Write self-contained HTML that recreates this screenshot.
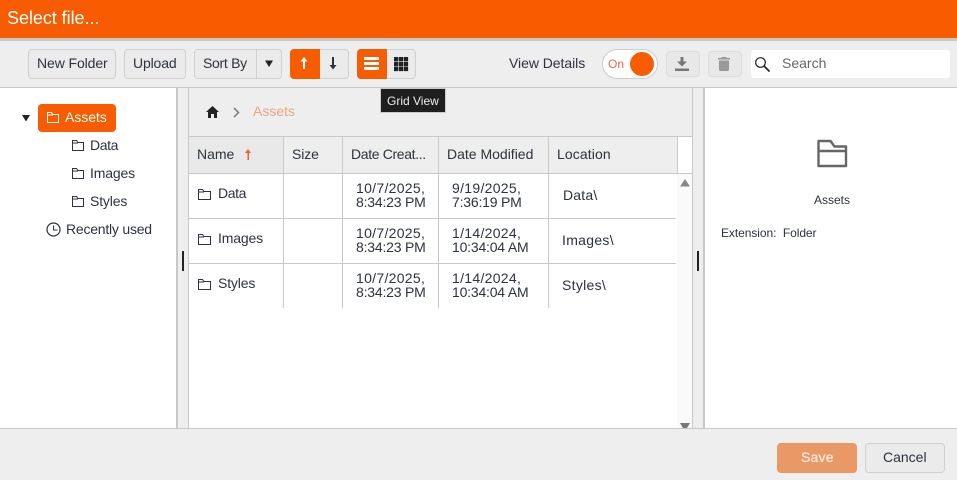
<!DOCTYPE html>
<html><head><meta charset="utf-8"><style>
*{box-sizing:border-box}
html,body{margin:0;padding:0}
body{width:957px;height:480px;overflow:hidden;position:relative;background:#eee;font-family:"Liberation Sans",sans-serif;font-size:14px;color:#2d323e}
.a{position:absolute}
.t{position:absolute;white-space:nowrap;line-height:18px}
.d{line-height:14px}
.d i{font-style:normal;letter-spacing:.3px}
.d b{font-weight:normal;letter-spacing:-.2px}
.b{position:absolute;top:49px;height:30px;background:#ebebeb;border:1px solid #d0d0d0;border-radius:4px}
.l{position:absolute;background:#c8c8c8}
svg{position:absolute;overflow:visible}
</style></head><body>
<div class="a" style="left:0;top:0;width:957px;height:38px;background:#f75c00"></div>
<div class="a" style="left:0;top:38px;width:957px;height:3px;background:#c8c8c8"></div>
<div class="t" style="left:7px;top:6px;font-size:18px;line-height:24px;color:#fff;letter-spacing:-.05px">Select file...</div>

<div class="b" style="left:28px;width:88px"></div><div class="t" style="left:37px;top:54px;letter-spacing:-.1px">New Folder</div>
<div class="b" style="left:124px;width:62px"></div><div class="t" style="left:133px;top:54px;letter-spacing:-.15px">Upload</div>
<div class="b" style="left:194px;width:88px"></div><div class="a" style="left:256px;top:50px;width:1px;height:28px;background:#d0d0d0"></div><div class="t" style="left:203px;top:54px;letter-spacing:-.3px">Sort By</div>
<svg style="left:264px;top:60px" width="10" height="8"><path d="M1 .5h8L5 7z" fill="#222"/></svg>

<div class="b" style="left:290px;width:59px"></div>
<div class="a" style="left:290px;top:49px;width:30px;height:30px;background:#f75c00;border-radius:4px 0 0 4px"></div>
<svg style="left:299px;top:57px" width="10" height="13"><path d="M5 0l3.500 4.500H6V12H4V4.500H1.500z" fill="#fff"/></svg>
<svg style="left:328px;top:57px" width="10" height="13"><path d="M5 12.500L8.500 8H6V0H4v8H1.500z" fill="#2d323e"/></svg>

<div class="b" style="left:357px;width:59px"></div>
<div class="a" style="left:357px;top:49px;width:30px;height:30px;background:#f75c00;border-radius:4px 0 0 4px"></div>
<svg style="left:364px;top:57px" width="15" height="13"><path d="M0 0h15v3H0zM0 5h15v3H0zM0 10h15v3H0z" fill="#fff"/></svg>
<svg style="left:394px;top:57px" width="14" height="14"><path d="M0 0h4.300v4.300H0zM4.900 0h4.300v4.300H4.900zM9.800 0h4.300v4.300H9.800zM0 4.900h4.300v4.300H0zM4.900 4.900h4.300v4.300H4.900zM9.800 4.900h4.300v4.300H9.800zM0 9.800h4.300v4.300H0zM4.900 9.800h4.300v4.300H4.900zM9.800 9.800h4.300v4.300H9.800z" fill="#222"/></svg>

<div class="t" style="left:509px;top:54px;letter-spacing:-.05px">View Details</div>
<div class="a" style="left:602px;top:49px;width:56px;height:30px;background:#fff;border:1px solid #ccc;border-radius:15px"></div>
<div class="t" style="left:608px;top:55px;font-size:12px;color:#f0674a">On</div>
<div class="a" style="left:630px;top:52px;width:24px;height:24px;background:#f75c00;border-radius:50%"></div>

<div class="a" style="left:666px;top:51px;width:34px;height:26px;background:#e8e8e8;border:1px solid #ddd;border-radius:4px"></div>
<svg style="left:675px;top:57px" width="14" height="14"><path d="M5.500 0h3v4.500H12L7 9.500 2 4.500h3.500zM0 11.500h14V14H0z" fill="#777"/></svg>
<div class="a" style="left:708px;top:51px;width:34px;height:26px;background:#e8e8e8;border:1px solid #ddd;border-radius:4px"></div>
<svg style="left:718px;top:57px" width="12" height="14"><path d="M3.500 0h5v1h3.500v1.500H0V1h3.500zM1 3.500h10V13l-1 1H2l-1-1z" fill="#999"/></svg>
<div class="a" style="left:751px;top:50px;width:199px;height:28px;background:#fff;border-radius:3px"></div>
<svg style="left:755px;top:57px" width="16" height="15"><circle cx="5.500" cy="5.500" r="4.800" fill="none" stroke="#222" stroke-width="1.200"/><path d="M9 9l5.500 5.500" stroke="#222" stroke-width="1.700"/></svg>
<div class="t" style="left:782px;top:54px;color:#666">Search</div>

<div class="l" style="left:0;top:87px;width:957px;height:1px"></div>
<div class="a" style="left:0;top:88px;width:176px;height:340px;background:#fff"></div>
<div class="l" style="left:176px;top:88px;width:2px;height:340px"></div>
<div class="l" style="left:188px;top:88px;width:1px;height:340px"></div>
<div class="a" style="left:182px;top:251px;width:2px;height:20px;background:#222"></div>
<div class="a" style="left:189px;top:88px;width:503px;height:340px;background:#fff"></div>
<div class="a" style="left:189px;top:88px;width:503px;height:48px;background:#eee"></div>
<div class="l" style="left:692px;top:88px;width:1px;height:340px"></div>
<div class="l" style="left:703px;top:88px;width:2px;height:340px"></div>
<div class="a" style="left:697px;top:251px;width:2px;height:20px;background:#222"></div>
<div class="a" style="left:705px;top:88px;width:252px;height:340px;background:#fff"></div>
<div class="l" style="left:0;top:428px;width:957px;height:1px"></div>

<svg style="left:21px;top:115px" width="10" height="7"><path d="M1 0h8L5 6.500z" fill="#222"/></svg>
<div class="a" style="left:38px;top:104px;width:78px;height:28px;background:#f75c00;border-radius:4px"></div>
<svg style="left:47px;top:112px" width="12" height="11"><path d="M.5 10.500V.5h4l1.500 2h5.500v8zM.5 3h5.500" fill="none" stroke="#fff"/></svg>
<div class="t" style="left:65px;top:108px;color:#fff;letter-spacing:-.05px">Assets</div>
<svg style="left:72px;top:140px" width="12" height="11"><path d="M.5 10.500V.5h4l1.500 2h5.500v8zM.5 3h5.500" fill="none" stroke="#2d323e"/></svg>
<div class="t" style="left:90px;top:136px;letter-spacing:-.4px">Data</div>
<svg style="left:72px;top:168px" width="12" height="11"><path d="M.5 10.500V.5h4l1.500 2h5.500v8zM.5 3h5.500" fill="none" stroke="#2d323e"/></svg>
<div class="t" style="left:90px;top:164px;letter-spacing:-.15px">Images</div>
<svg style="left:72px;top:196px" width="12" height="11"><path d="M.5 10.500V.5h4l1.500 2h5.500v8zM.5 3h5.500" fill="none" stroke="#2d323e"/></svg>
<div class="t" style="left:90px;top:192px;letter-spacing:-.15px">Styles</div>
<svg style="left:46px;top:222px" width="15" height="15"><circle cx="7.500" cy="7.500" r="6.500" fill="none" stroke="#2d323e" stroke-width="1.200"/><path d="M7.500 3.500v4.500h4" fill="none" stroke="#2d323e"/></svg>
<div class="t" style="left:66px;top:220px;letter-spacing:-.22px">Recently used</div>

<svg style="left:206px;top:106px" width="13" height="12"><path d="M6.500 0L13 6h-2v6H8V8H5v4H2V6H0z" fill="#222"/></svg>
<svg style="left:233px;top:107px" width="7" height="11"><path d="M1 1l4.500 4.500L1 10" fill="none" stroke="#777" stroke-width="1.500"/></svg>
<div class="t" style="left:253px;top:102px;color:#eda37a">Assets</div>

<div class="a" style="left:189px;top:136px;width:488px;height:37px;background:#eee"></div>
<div class="a" style="left:189px;top:137px;width:94px;height:36px;background:#e9e9e9"></div>
<div class="l" style="left:189px;top:136px;width:503px;height:1px"></div>
<div class="l" style="left:189px;top:173px;width:503px;height:1px"></div>
<div class="l" style="left:189px;top:218px;width:487px;height:1px"></div>
<div class="l" style="left:189px;top:263px;width:487px;height:1px"></div>
<div class="l" style="left:283px;top:137px;width:1px;height:171px"></div>
<div class="l" style="left:342px;top:137px;width:1px;height:171px"></div>
<div class="l" style="left:438px;top:137px;width:1px;height:171px"></div>
<div class="l" style="left:548px;top:137px;width:1px;height:171px"></div>
<div class="l" style="left:677px;top:137px;width:1px;height:36px"></div>
<div class="a" style="left:677px;top:174px;width:15px;height:254px;background:#fafafa"></div>
<svg style="left:680px;top:179px" width="10" height="8"><path d="M5 0l5 7.500H0z" fill="#888"/></svg>
<svg style="left:680px;top:423px" width="10" height="5"><path d="M0 0h10L7 5H3z" fill="#777"/></svg>

<div class="t" style="left:197px;top:145px">Name</div>
<svg style="left:245px;top:149px" width="7" height="11"><path d="M3 0l3 4H4v7H2.500V4H0z" fill="#f5602a"/></svg>
<div class="t" style="left:292px;top:145px;letter-spacing:-.1px">Size</div>
<div class="t" style="left:351px;top:145px;letter-spacing:-.35px">Date Creat...</div>
<div class="t" style="left:447px;top:145px">Date Modified</div>
<div class="t" style="left:557px;top:145px;letter-spacing:.1px">Location</div>

<svg style="left:198px;top:189px" width="13" height="11"><path d="M.5 10.500V.5h4l1.500 2h6.500v8zM.5 3h5.500" fill="none" stroke="#2d323e"/></svg>
<div class="t" style="left:218px;top:184px;letter-spacing:-.4px">Data</div>
<svg style="left:198px;top:234px" width="13" height="11"><path d="M.5 10.500V.5h4l1.500 2h6.500v8zM.5 3h5.500" fill="none" stroke="#2d323e"/></svg>
<div class="t" style="left:218px;top:229px;letter-spacing:-.15px">Images</div>
<svg style="left:198px;top:279px" width="13" height="11"><path d="M.5 10.500V.5h4l1.500 2h6.500v8zM.5 3h5.500" fill="none" stroke="#2d323e"/></svg>
<div class="t" style="left:218px;top:274px;letter-spacing:-.15px">Styles</div>

<div class="t d" style="left:356px;top:181px"><i>10/7/2025,</i><br><b>8:34:23 PM</b></div>
<div class="t d" style="left:356px;top:226px"><i>10/7/2025,</i><br><b>8:34:23 PM</b></div>
<div class="t d" style="left:356px;top:271px"><i>10/7/2025,</i><br><b>8:34:23 PM</b></div>
<div class="t d" style="left:452px;top:181px"><i>9/19/2025,</i><br><b>7:36:19 PM</b></div>
<div class="t d" style="left:452px;top:226px"><i>1/14/2024,</i><br><b>10:34:04 AM</b></div>
<div class="t d" style="left:452px;top:271px"><i>1/14/2024,</i><br><b>10:34:04 AM</b></div>
<div class="t" style="left:563px;top:186px;letter-spacing:.2px">Data\</div>
<div class="t" style="left:562px;top:231px;letter-spacing:.3px">Images\</div>
<div class="t" style="left:562px;top:276px;letter-spacing:.3px">Styles\</div>

<svg style="left:816px;top:139px" width="32" height="29"><path d="M2.500 27V2h12l4 5.500H30V27zM3 12h27" fill="none" stroke="#666" stroke-width="2.400" stroke-linejoin="round"/></svg>
<div class="t" style="left:814px;top:191px;font-size:12px">Assets</div>
<div class="t" style="left:721px;top:224px;font-size:12px;letter-spacing:-.07px">Extension:&nbsp; Folder</div>

<div class="a" style="left:380px;top:88px;width:66px;height:25px;background:#1e1e1e;border:1px solid #ccc"></div>
<div class="t" style="left:387px;top:92px;font-size:12px;color:#eee">Grid View</div>

<div class="a" style="left:777px;top:443px;width:80px;height:30px;background:#ea9866;border-radius:4px"></div>
<div class="t" style="left:801px;top:448px;color:#fde8d8;-webkit-text-stroke:.3px #fde8d8;letter-spacing:.2px">Save</div>
<div class="a" style="left:865px;top:443px;width:80px;height:30px;background:#ebebeb;border:1px solid #d0d0d0;border-radius:4px"></div>
<div class="t" style="left:883px;top:448px">Cancel</div>
</body></html>
